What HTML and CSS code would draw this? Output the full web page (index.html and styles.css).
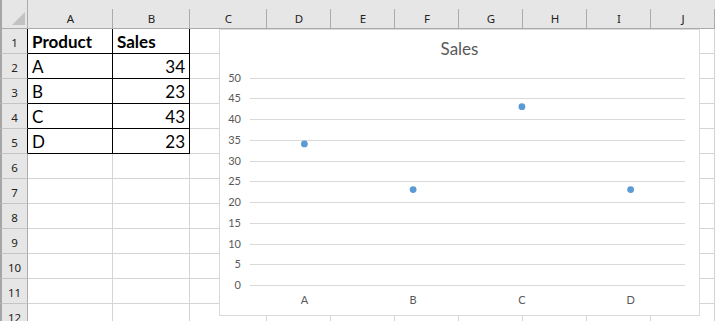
FILE: index.html
```html
<!DOCTYPE html>
<html>
<head>
  <title>Sales</title>
  <link rel="stylesheet" href="styles.css">
</head>
<body>

<div class="sheet">
  <div class="grid" id="grid">
    <div class="corner"><span class="tri"></span></div>
    <div class="ch">A</div>
    <div class="ch">B</div>
    <div class="ch">C</div>
    <div class="ch">D</div>
    <div class="ch">E</div>
    <div class="ch">F</div>
    <div class="ch">G</div>
    <div class="ch">H</div>
    <div class="ch">I</div>
    <div class="ch">J</div>

    <div class="rh edge">1</div>
    <div class="c tb bold">Product</div>
    <div class="c tb bold">Sales</div>
    <div class="c"></div><div class="c"></div><div class="c"></div><div class="c"></div><div class="c"></div><div class="c"></div><div class="c"></div><div class="c"></div>

    <div class="rh edge">2</div>
    <div class="c tb">A</div>
    <div class="c tb num">34</div>
    <div class="c"></div><div class="c"></div><div class="c"></div><div class="c"></div><div class="c"></div><div class="c"></div><div class="c"></div><div class="c"></div>

    <div class="rh edge">3</div>
    <div class="c tb">B</div>
    <div class="c tb num">23</div>
    <div class="c"></div><div class="c"></div><div class="c"></div><div class="c"></div><div class="c"></div><div class="c"></div><div class="c"></div><div class="c"></div>

    <div class="rh edge">4</div>
    <div class="c tb">C</div>
    <div class="c tb num">43</div>
    <div class="c"></div><div class="c"></div><div class="c"></div><div class="c"></div><div class="c"></div><div class="c"></div><div class="c"></div><div class="c"></div>

    <div class="rh edge">5</div>
    <div class="c tb">D</div>
    <div class="c tb num">23</div>
    <div class="c"></div><div class="c"></div><div class="c"></div><div class="c"></div><div class="c"></div><div class="c"></div><div class="c"></div><div class="c"></div>
  </div>

  <div class="chart">
    <svg width="479" height="285" viewBox="0 0 479 285">
      <text class="title" x="239.5" y="25" text-anchor="middle">Sales</text>
      <g id="axis"></g>
      <g id="points"></g>
    </svg>
  </div>
</div>

<script>
  // empty rows 6..12
  var grid = document.getElementById("grid");
  for (var r = 6; r <= 12; r++) {
    var html = '<div class="rh">' + r + '</div>';
    for (var k = 0; k < 10; k++) {
      html += '<div class="c"></div>';
    }
    grid.insertAdjacentHTML("beforeend", html);
  }

  // chart: y = 255 - v * 4.148, plot from x=30 to x=465
  var ns = "http://www.w3.org/2000/svg";
  var axis = document.getElementById("axis");
  var points = document.getElementById("points");

  function yOf(v) {
    return 255 - v * 4.148;
  }

  for (var v = 0; v <= 50; v += 5) {
    var y = Math.round(yOf(v)) + 0.5;
    var line = document.createElementNS(ns, "line");
    line.setAttribute("x1", 30);
    line.setAttribute("x2", 465);
    line.setAttribute("y1", y);
    line.setAttribute("y2", y);
    line.setAttribute("class", "gl");
    axis.appendChild(line);

    var t = document.createElementNS(ns, "text");
    t.setAttribute("x", 21);
    t.setAttribute("y", yOf(v) + 4);
    t.setAttribute("text-anchor", "end");
    t.setAttribute("class", "lbl");
    t.textContent = v;
    axis.appendChild(t);
  }

  var data = [["A", 34], ["B", 23], ["C", 43], ["D", 23]];
  data.forEach(function (d, i) {
    var cx = 30 + 108.75 * i + 54.4;

    var c = document.createElementNS(ns, "circle");
    c.setAttribute("cx", cx);
    c.setAttribute("cy", yOf(d[1]));
    c.setAttribute("r", 3.4);
    c.setAttribute("class", "dot");
    points.appendChild(c);

    var t = document.createElementNS(ns, "text");
    t.setAttribute("x", cx);
    t.setAttribute("y", 274);
    t.setAttribute("text-anchor", "middle");
    t.setAttribute("class", "lbl");
    t.textContent = d[0];
    axis.appendChild(t);
  });
</script>

</body>
</html>
```

FILE: styles.css
```css
html, body {
  margin: 0;
  padding: 0;
  background-color: #fff;
  overflow: hidden;
}

.sheet {
  position: relative;
  width: 715px;
  height: 321px;
  overflow: hidden;
}

.grid {
  display: grid;
  grid-template-columns: 28px 85px 77px 77px 64px 64px 64px 64px 64px 64px 64px;
  grid-template-rows: 29px repeat(12, 25px);
}

.grid > div {
  box-sizing: border-box;
}

.corner {
  background-color: #e6e6e6;
  border-bottom: 1px solid #ababab;
  border-right: 1px solid #ababab;
  border-left: 2px solid #a6a6a6;
  position: relative;
}

.corner .tri {
  position: absolute;
  left: 10px;
  top: 12px;
  width: 0;
  height: 0;
  border-left: 13px solid transparent;
  border-bottom: 13px solid #c2c2c2;
}

.ch {
  background: linear-gradient(#ababab, #ababab) right 0 bottom 0 / 1px 19px no-repeat, #e6e6e6;
  border-bottom: 1px solid #ababab;
  padding-top: 9px;
  display: flex;
  align-items: center;
  justify-content: center;
  font-family: "Noto Sans", sans-serif;
  font-size: 11.5px;
  color: #222;
}

.rh {
  background-color: #e6e6e6;
  border-left: 2px solid #a6a6a6;
  border-right: 1px solid #ababab;
  border-bottom: 1px solid #c4c4c4;
  display: flex;
  align-items: center;
  justify-content: center;
  padding-top: 3px;
  font-family: "Noto Sans", sans-serif;
  font-size: 11.5px;
  color: #222;
}

.rh.edge {
  border-right-color: #000;
}

.c {
  border-right: 1px solid #d4d4d4;
  border-bottom: 1px solid #d4d4d4;
  display: flex;
  align-items: flex-end;
  padding: 0 4px 1px 4px;
  font-family: Lato, "Liberation Sans", sans-serif;
  font-size: 17px;
  line-height: 20px;
  color: #000;
  white-space: nowrap;
}

.c.tb {
  border-right-color: #000;
  border-bottom-color: #000;
}

.c.bold {
  font-weight: bold;
}

.c.num {
  justify-content: flex-end;
}

.chart {
  position: absolute;
  left: 219px;
  top: 29px;
  width: 481px;
  height: 287px;
  box-sizing: border-box;
  border: 1px solid #d9d9d9;
  background-color: #fff;
}

.chart svg {
  display: block;
}

.title {
  font-family: Lato, "Liberation Sans", sans-serif;
  font-size: 17px;
  fill: #595959;
}

.lbl {
  font-family: Lato, "Liberation Sans", sans-serif;
  font-size: 11px;
  fill: #595959;
}

.gl {
  stroke: #d9d9d9;
  stroke-width: 1;
  shape-rendering: crispEdges;
}

.dot {
  fill: #5b9bd5;
}
```
